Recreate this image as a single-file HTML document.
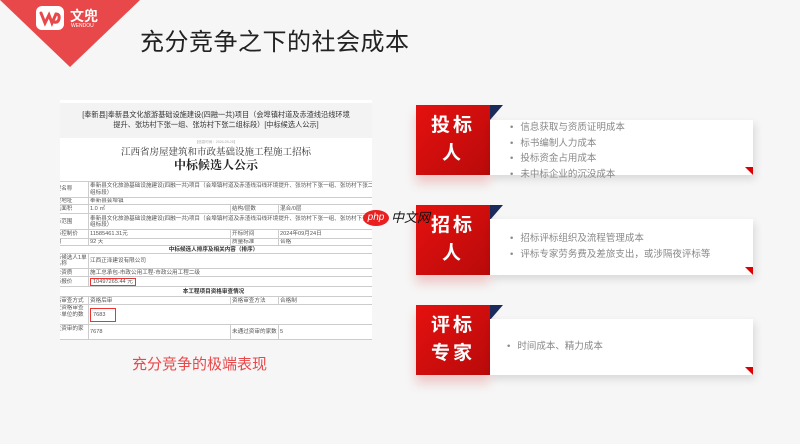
<!DOCTYPE html>
<html><head><meta charset="utf-8"><style>
*{margin:0;padding:0;box-sizing:border-box}
body{width:800px;height:444px;background:#f6f6f6;position:relative;overflow:hidden;font-family:"Liberation Sans","Noto Sans CJK SC",sans-serif}
.abs{position:absolute}
.tri{left:0;top:0;width:0;height:0;border-left:70px solid transparent;border-right:70px solid transparent;border-top:67px solid #e8484a}
.logo{left:36px;top:6px;width:28px;height:24px;background:#fff;border-radius:6px}
.title{left:140px;top:22px;font-size:24px;color:#222;letter-spacing:0.5px}
.doc{left:60px;top:100px;width:312px;height:240px;background:#fff;overflow:hidden;font-size:5.6px;color:#555;line-height:6.2px}
table{border-collapse:collapse;width:330px;position:absolute;left:-12px;top:81px;table-layout:fixed}
td{border:1px solid #ccc;padding:0 1px;vertical-align:middle;overflow:hidden;white-space:normal}
.red{left:416px;width:74px;height:70px;background:linear-gradient(135deg,#e5110f,#b80a0a);color:#fff;font-size:19px;font-weight:bold;text-align:center;line-height:28px;letter-spacing:3px;padding-top:7px;box-shadow:0 8px 10px rgba(220,60,60,.25)}
.navy{left:490px;width:0;height:0;border-left:13px solid #1a2a5a;border-bottom:15px solid transparent}
.panel{left:490px;width:263px;background:#fff;box-shadow:2px 4px 8px rgba(0,0,0,.12);font-size:9.5px;color:#888;line-height:15.5px;padding-left:20px}
.panel li{list-style:none}
.panel li:before{content:"•";margin-right:7px;color:#888}
.corner{width:0;height:0;border-left:8px solid transparent;border-top:8px solid #d00}
</style></head><body>
<div class="abs tri"></div>
<div class="abs logo"><svg width="28" height="24" viewBox="0 0 28 24"><path d="M5 7 L9 17 L13 9 L16 17 L20 8 Q24 8 23 13 Q22 17 18 16" fill="none" stroke="#e8484a" stroke-width="3" stroke-linecap="round"/></svg></div>
<div class="abs" style="left:70px;top:6px;color:#fff;font-size:14px;font-weight:bold">文兜</div>
<div class="abs" style="left:71px;top:23px;color:#fff;font-size:5px">WENDOU</div>
<div class="abs title">充分竞争之下的社会成本</div>

<div class="abs doc">
 <div style="position:absolute;left:0;top:3px;width:312px;height:35px;background:#f3f3f3;text-align:center;font-size:7.2px;line-height:10px;color:#333;padding-top:7px">[奉新县]奉新县文化旅游基础设施建设(四融一共)项目（会埠镇村道及赤渣线沿线环境<br>提升、张坊村下张一组、张坊村下张二组标段）[中标候选人公示]</div>
 <div style="position:absolute;left:0;top:39px;width:312px;text-align:center;font-size:3.5px;color:#aaa">【信息时间：2024-09-25】</div>
 <div style="position:absolute;left:0;top:48px;width:312px;text-align:center;font-size:9.5px;color:#333;font-family:'Noto Serif CJK SC',serif">江西省房屋建筑和市政基础设施工程施工招标</div>
 <div style="position:absolute;left:0;top:62px;width:312px;text-align:center;font-size:12px;font-weight:bold;color:#222;font-family:'Noto Serif CJK SC',serif">中标候选人公示</div>
 <table>
 <colgroup><col style="width:40px"><col style="width:142px"><col style="width:48px"><col style="width:100px"></colgroup>
 <tr style="height:16px"><td>工程名称</td><td colspan="3">奉新县文化旅游基础设施建设(四融一共)项目（会埠镇村道及赤渣线沿线环境提升、张坊村下张一组、张坊村下张二组标段）</td></tr>
 <tr style="height:7px"><td>工程地址</td><td colspan="3">奉新县会埠镇</td></tr>
 <tr style="height:9px"><td>建筑面积</td><td>1.0 ㎡</td><td>结构/层数</td><td>混合/0层</td></tr>
 <tr style="height:16px"><td>招标范围</td><td colspan="3">奉新县文化旅游基础设施建设(四融一共)项目（会埠镇村道及赤渣线沿线环境提升、张坊村下张一组、张坊村下张二组标段）</td></tr>
 <tr style="height:9px"><td>招标控制价</td><td>11585461.31元</td><td>开标时间</td><td>2024年09月24日</td></tr>
 <tr style="height:7px"><td>工期</td><td>92 天</td><td>质量标准</td><td>合格</td></tr>
 <tr style="height:8px"><td colspan="4" style="text-align:center;font-weight:bold;color:#333">中标候选人排序及相关内容（排序）</td></tr>
 <tr style="height:15px"><td>中标候选人1单位名称</td><td colspan="3">江西正泽建设有限公司</td></tr>
 <tr style="height:8px"><td>企业资质</td><td colspan="3">施工总承包-市政公用工程-市政公用工程二级</td></tr>
 <tr style="height:10px"><td>投标报价</td><td colspan="3"><span style="border:1px solid #e33;padding:0 2px">10497265.44 元</span></td></tr>
 <tr style="height:10px"><td colspan="4" style="text-align:center;font-weight:bold;color:#333">本工程项目资格审查情况</td></tr>
 <tr style="height:8px"><td>资格审查方式</td><td>资格后审</td><td>资格审查方法</td><td>合格制</td></tr>
 <tr style="height:17px"><td>提交资格审查文件单位的数量</td><td colspan="3"><span style="display:inline-block;border:1px solid #e33;width:26px;height:14px;padding:3px 2px">7683</span></td></tr>
 <tr style="height:15px"><td>通过资审的家数</td><td>7678</td><td>未通过资审的家数</td><td>5</td></tr>
 </table>
</div>
<div class="abs" style="left:132px;top:353px;font-size:15px;color:#e8484a">充分竞争的极端表现</div>

<div class="abs red" style="top:105px">投标<br>人</div>
<div class="abs navy" style="top:105px"></div>
<div class="abs panel" style="top:120px;height:55px;padding-top:0"><ul><li>信息获取与资质证明成本</li><li>标书编制人力成本</li><li>投标资金占用成本</li><li>未中标企业的沉没成本</li></ul><div class="abs corner" style="right:0;bottom:0"></div></div>

<div class="abs red" style="top:205px">招标<br>人</div>
<div class="abs navy" style="top:205px"></div>
<div class="abs panel" style="top:219px;height:56px;padding-top:12px"><ul><li>招标评标组织及流程管理成本</li><li>评标专家劳务费及差旅支出，或涉隔夜评标等</li></ul><div class="abs corner" style="right:0;bottom:0"></div></div>

<div class="abs red" style="top:305px">评标<br>专家</div>
<div class="abs navy" style="top:305px"></div>
<div class="abs panel" style="top:319px;height:56px;padding-top:20px;padding-left:17px"><ul><li>时间成本、精力成本</li></ul><div class="abs corner" style="right:0;bottom:0"></div></div>

<div class="abs" style="left:363px;top:210px;width:26px;height:16px;background:#e82020;border-radius:50%;color:#fff;font-size:10px;font-style:italic;text-align:center;line-height:15px;z-index:5">php</div>
<div class="abs" style="left:391px;top:207px;font-size:13px;color:#111;font-style:italic;z-index:5">中文网</div>
</body></html>
